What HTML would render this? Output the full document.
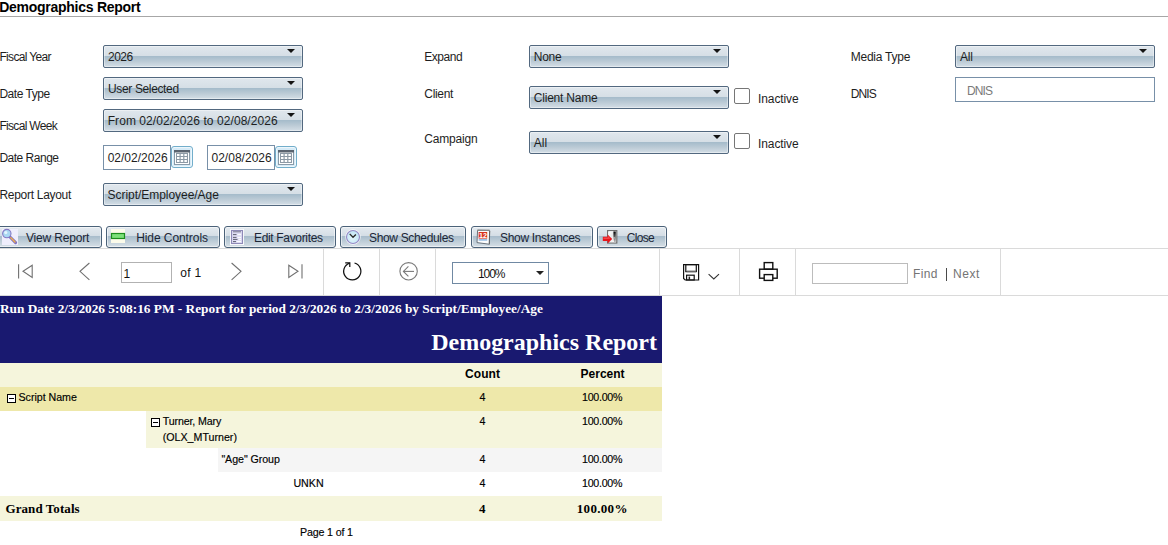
<!DOCTYPE html>
<html><head><meta charset="utf-8">
<style>
*{margin:0;padding:0;box-sizing:border-box}
html,body{width:1168px;height:545px;overflow:hidden;background:#fff}
body{position:relative;font-family:"Liberation Sans",sans-serif;color:#000}
.a{position:absolute}
.x{position:absolute;white-space:nowrap;line-height:20px}
.dd{position:absolute;width:200px;height:23px;border:1px solid #52687f;border-radius:2px;
 background:linear-gradient(#e0e7ed 0,#d6dfe6 9.5px,#a6bccb 10.5px,#bccbd6 15.5px,#d4dee6 21px);
 box-shadow:inset 0 0 0 1px rgba(255,255,255,.4)}
.dd i{position:absolute;right:7.5px;top:3px;width:0;height:0;border-left:4px solid transparent;border-right:4px solid transparent;border-top:4.5px solid #141414}
.tb{position:absolute;height:25px;border:1px solid #7890a8;background:#fff}
.cal{position:absolute;width:22px;height:22px;border:1px solid #72aecb;border-radius:3px;background:#d6ebf7;box-shadow:inset 0 0 0 1px #eef7fc}
.chk{position:absolute;width:16px;height:16px;border:1px solid #767676;border-radius:2px;background:#fff}
.btn{position:absolute;top:226px;height:22px;border:1px solid #4b6279;border-radius:3px;
 background:linear-gradient(#e4eaef 0,#d5dee6 8.5px,#a9bdcc 9.5px,#bdccd7 14px,#d6dfe6 20px);
 box-shadow:inset 0 0 0 1px rgba(255,255,255,.55)}
.sep{position:absolute;top:249px;width:1px;height:46px;background:#dadada}
.mi{position:absolute;width:9px;height:9px;border:1px solid #000;background:#fff}
.mi:after{content:"";position:absolute;left:1px;top:3px;width:5px;height:1px;background:#000}
svg{position:absolute;overflow:visible}
</style></head><body>

<div class="a" style="left:0;top:16px;width:1168px;height:1px;background:#a7a7a7"></div>

<div class="dd" style="left:103px;top:45px"><i></i></div>
<div class="dd" style="left:103px;top:77px"><i></i></div>
<div class="dd" style="left:103px;top:109px"><i></i></div>
<div class="tb" style="left:103px;top:145px;width:68px"></div>
<div class="cal" style="left:171px;top:146px"></div>
<div class="tb" style="left:207px;top:145px;width:68px"></div>
<div class="cal" style="left:275px;top:146px"></div>
<div class="dd" style="left:103px;top:183px"><i></i></div>

<div class="dd" style="left:529px;top:45px"><i></i></div>
<div class="dd" style="left:529px;top:86px"><i></i></div>
<div class="dd" style="left:529px;top:131px"><i></i></div>
<div class="chk" style="left:734px;top:88px"></div>
<div class="chk" style="left:734px;top:133px"></div>

<div class="dd" style="left:955px;top:45px"><i></i></div>
<div class="tb" style="left:955px;top:77px;width:200px"></div>

<!-- calendar icons -->
<svg style="left:171px;top:146px" width="22" height="22" viewBox="0 0 22 22">
 <rect x="3.5" y="4.5" width="15" height="14" fill="#fff" stroke="#8a9aa8" stroke-width="1"/>
 <rect x="3" y="4" width="16" height="2.5" fill="#5a6470"/>
 <rect x="5" y="7" width="12" height="10" fill="#8d9aa6"/>
 <g fill="#fff"><rect x="6" y="8" width="2.5" height="2"/><rect x="9.7" y="8" width="2.5" height="2"/><rect x="13.4" y="8" width="2.5" height="2"/>
 <rect x="6" y="11" width="2.5" height="2"/><rect x="9.7" y="11" width="2.5" height="2"/><rect x="13.4" y="11" width="2.5" height="2"/>
 <rect x="6" y="14" width="2.5" height="2"/><rect x="9.7" y="14" width="2.5" height="2"/><rect x="13.4" y="14" width="2.5" height="2"/></g>
</svg>
<svg style="left:275px;top:146px" width="22" height="22" viewBox="0 0 22 22">
 <rect x="3.5" y="4.5" width="15" height="14" fill="#fff" stroke="#8a9aa8" stroke-width="1"/>
 <rect x="3" y="4" width="16" height="2.5" fill="#5a6470"/>
 <rect x="5" y="7" width="12" height="10" fill="#8d9aa6"/>
 <g fill="#fff"><rect x="6" y="8" width="2.5" height="2"/><rect x="9.7" y="8" width="2.5" height="2"/><rect x="13.4" y="8" width="2.5" height="2"/>
 <rect x="6" y="11" width="2.5" height="2"/><rect x="9.7" y="11" width="2.5" height="2"/><rect x="13.4" y="11" width="2.5" height="2"/>
 <rect x="6" y="14" width="2.5" height="2"/><rect x="9.7" y="14" width="2.5" height="2"/><rect x="13.4" y="14" width="2.5" height="2"/></g>
</svg>

<!-- buttons -->
<div class="btn" style="left:-3px;width:105px"></div>
<div class="btn" style="left:106px;width:114px"></div>
<div class="btn" style="left:224px;width:112px"></div>
<div class="btn" style="left:340px;width:126px"></div>
<div class="btn" style="left:471px;width:122px"></div>
<div class="btn" style="left:597px;width:70px"></div>

<!-- button icons -->
<svg style="left:2px;top:229px" width="16" height="16" viewBox="0 0 16 16">
 <rect x="0" y="0" width="16" height="16" fill="#efeefc"/>
 <line x1="8" y1="8" x2="13.6" y2="13.6" stroke="#7d6fc0" stroke-width="3" stroke-linecap="round"/>
 <line x1="8.8" y1="8.8" x2="13" y2="13" stroke="#f2b04a" stroke-width="1.4" stroke-linecap="round"/>
 <circle cx="4.8" cy="4.6" r="4.2" fill="#a9d8f2" stroke="#8479c4" stroke-width="1.1"/>
 <circle cx="3.8" cy="3.6" r="1.6" fill="#e4f5fd"/>
</svg>
<svg style="left:111px;top:229px" width="14" height="14" viewBox="0 0 14 14">
 <rect x="0" y="0" width="14" height="14" fill="#fcfbea"/>
 <rect x="0.5" y="4.5" width="13" height="5" fill="#7ee07a" stroke="#1d8d1d" stroke-width="1.2"/>
</svg>
<svg style="left:230px;top:229px" width="14" height="16" viewBox="0 0 14 16">
 <rect x="0" y="0" width="14" height="16" fill="#fbfcfd"/>
 <rect x="1.5" y="1.5" width="11" height="13" fill="#dedcf3" stroke="#8f8ab8" stroke-width="1.1"/>
 <g stroke="#5e5e70" stroke-width="1"><line x1="3" y1="2.8" x2="11" y2="2.8" stroke="#77778a"/><line x1="3" y1="5.6" x2="6.5" y2="5.6"/><line x1="3" y1="8.4" x2="6.5" y2="8.4"/><line x1="3" y1="10.4" x2="7.5" y2="10.4"/><line x1="3" y1="12.6" x2="6" y2="12.6"/></g>
 <g stroke="#fff" stroke-width="1"><line x1="7.5" y1="5.6" x2="11" y2="5.6"/><line x1="7.5" y1="8.4" x2="11" y2="8.4"/><line x1="8.5" y1="10.4" x2="11" y2="10.4"/><line x1="7" y1="12.6" x2="11" y2="12.6"/></g>
</svg>
<svg style="left:345px;top:229px" width="16" height="16" viewBox="0 0 16 16">
 <defs><radialGradient id="cg" cx=".45" cy=".6" r=".6"><stop offset="0" stop-color="#e4f6fc"/><stop offset="1" stop-color="#bfe3f4"/></radialGradient></defs>
 <circle cx="8" cy="8" r="7.7" fill="#fff" opacity=".85"/>
 <circle cx="8" cy="8" r="6.5" fill="url(#cg)" stroke="#9489c6" stroke-width="1.1"/>
 <polyline points="4.7,4.9 8,8.3 10.9,5.5" fill="none" stroke="#262626" stroke-width="1.3"/>
</svg>
<svg style="left:476px;top:229px" width="15" height="16" viewBox="0 0 15 16">
 <path d="M1.6 1.2 L13.6 1.6 L13.2 15.2 L1 13.6 Z" fill="#fdfdfd" stroke="#6a737c" stroke-width="1"/>
 <path d="M13.6 1.6 L14.2 2 L13.8 15.4 L13.2 15.2 Z" fill="#555"/>
 <rect x="1.4" y="0.6" width="12.2" height="1.4" fill="#8a8a8a"/>
 <rect x="2.6" y="3" width="8.6" height="6.6" fill="#d9341e"/>
 <text x="6.9" y="8.9" font-family="Liberation Sans" font-weight="bold" font-size="7.2" fill="#fff" text-anchor="middle">12</text>
 <rect x="2.6" y="10.1" width="8.6" height="1.6" fill="#8db8e2"/>
</svg>
<svg style="left:602px;top:229px" width="16" height="16" viewBox="0 0 16 16">
 <defs><linearGradient id="dg" x1="0" y1="0" x2="1" y2="1"><stop offset="0" stop-color="#fff"/><stop offset=".45" stop-color="#e6e6e6"/><stop offset="1" stop-color="#fff"/></linearGradient>
 <linearGradient id="dk" x1="0" y1="0" x2="0" y2="1"><stop offset="0" stop-color="#000"/><stop offset="1" stop-color="#bbb"/></linearGradient></defs>
 <rect x="5.6" y="1.6" width="9.2" height="12.4" fill="#fff" stroke="#707070" stroke-width="1.2"/>
 <rect x="6.6" y="2.6" width="7.2" height="10.6" fill="url(#dg)"/>
 <path d="M11.4 2.6 L13.8 2.6 L13.8 13 L12 13 L11.4 9 Z" fill="url(#dk)"/>
 <rect x="11.6" y="8.4" width="1" height="1" fill="#fff"/>
 <path d="M0.8 7.8 L5.6 7.8 L5.6 5.4 L10.2 9.9 L5.6 14.4 L5.6 12 L0.8 12 Z" fill="#e8141a"/>
 <path d="M1.5 8.6 L6 8.6 L6 7 L8.5 9.5 L6 9.9 L1.5 9.9 Z" fill="#f66" opacity=".6"/>
</svg>

<!-- toolbar -->
<div class="a" style="left:0;top:248px;width:1168px;height:1px;background:#dadada"></div>
<div class="a" style="left:0;top:295px;width:1168px;height:1px;background:#dadada"></div>
<div class="sep" style="left:323px"></div>
<div class="sep" style="left:379px"></div>
<div class="sep" style="left:435px"></div>
<div class="sep" style="left:659px"></div>
<div class="sep" style="left:739px"></div>
<div class="sep" style="left:795px"></div>
<div class="sep" style="left:1000px"></div>

<svg style="left:0;top:249px" width="1168" height="46" viewBox="0 249 1168 46">
 <g fill="none" stroke="#707070" stroke-width="1.1">
  <line x1="18.6" y1="264.2" x2="18.6" y2="278.5"/>
  <path d="M32.2 265.2 L23 271.3 L32.2 277.5 Z"/>
  <polyline points="89.4,263 80,271.3 89.4,279.8"/>
  <polyline points="231.6,263 241,271.3 231.6,279.8"/>
  <path d="M288.8 265.2 L298 271.3 L288.8 277.5 Z"/>
  <line x1="302" y1="264.2" x2="302" y2="278.5"/>
 </g>
 <g fill="none" stroke="#111" stroke-width="1.25">
  <path d="M354.5 263 A8.6 8.6 0 1 1 349.7 263.1"/>
  <polyline points="345.2,262.8 349.8,262.8 349.8,267"/>
 </g>
 <g fill="none" stroke="#7a7a7a" stroke-width="1.1">
  <circle cx="408.6" cy="271.3" r="8.7"/>
  <polyline points="408.4,266.4 403.4,271.4 408.4,276.4"/>
  <line x1="403.4" y1="271.4" x2="414" y2="271.4"/>
 </g>
 <g fill="none" stroke="#111" stroke-width="1.2">
  <path d="M683.6 264.6 L698.6 264.6 L698.6 280 L685.2 280 L683.6 278.4 Z"/>
  <rect x="685.8" y="264.6" width="10.5" height="7" />
  <rect x="686.6" y="275.2" width="7.6" height="4.8"/>
 </g>
 <rect x="686.4" y="270.6" width="9.6" height="1.6" fill="#666"/>
 <rect x="688.6" y="276.6" width="1.5" height="3.4" fill="#222"/>
 <polyline points="708.6,274.2 713.8,279 719,274.2" fill="none" stroke="#333" stroke-width="1.1"/>
 <g fill="none" stroke="#111" stroke-width="1.4">
  <rect x="764.2" y="262.6" width="8.6" height="6.6"/>
  <rect x="759.6" y="269.2" width="17.6" height="9"/>
  <rect x="764.2" y="274.6" width="8.6" height="5.8" fill="#fff"/>
 </g>
</svg>

<div class="a" style="left:121px;top:262px;width:51px;height:21px;border:1px solid #b2b2b2"></div>
<div class="a" style="left:452px;top:262px;width:97px;height:22px;border:1px solid #7089a3"></div>
<div class="a" style="left:535.5px;top:271px;width:0;height:0;border-left:4px solid transparent;border-right:4px solid transparent;border-top:4.5px solid #222"></div>
<div class="a" style="left:812px;top:263px;width:96px;height:21px;border:1px solid #bcbcbc"></div>
<div class="a" style="left:946px;top:268px;width:1px;height:13px;background:#4a4a4a"></div>

<!-- report -->
<div class="a" style="left:0;top:296px;width:662px;height:67px;background:#191970"></div>
<div class="a" style="left:0;top:363px;width:662px;height:24px;background:#f5f5dc"></div>
<div class="a" style="left:0;top:387px;width:662px;height:24px;background:#eee8aa"></div>
<div class="mi" style="left:7px;top:394px"></div>
<div class="a" style="left:146px;top:411px;width:516px;height:37px;background:#f5f5dc"></div>
<div class="mi" style="left:151px;top:418px"></div>
<div class="a" style="left:218px;top:448px;width:444px;height:24px;background:#f5f5f5"></div>
<div class="a" style="left:0;top:496px;width:662px;height:25px;background:#f5f5dc"></div>

<div class="x" style="left:-0.80px;top:-3px;font-family:'Liberation Sans',sans-serif;font-weight:700;font-size:14px;letter-spacing:-0.266px;color:#000;">Demographics Report</div>
<div class="x" style="left:-0.60px;top:47px;font-family:'Liberation Sans',sans-serif;font-weight:400;font-size:12px;letter-spacing:-0.662px;color:#1e1e1e;">Fiscal Year</div>
<div class="x" style="left:-0.60px;top:84px;font-family:'Liberation Sans',sans-serif;font-weight:400;font-size:12px;letter-spacing:-0.453px;color:#1e1e1e;">Date Type</div>
<div class="x" style="left:-0.60px;top:116px;font-family:'Liberation Sans',sans-serif;font-weight:400;font-size:12px;letter-spacing:-0.683px;color:#1e1e1e;">Fiscal Week</div>
<div class="x" style="left:-0.60px;top:148px;font-family:'Liberation Sans',sans-serif;font-weight:400;font-size:12px;letter-spacing:-0.497px;color:#1e1e1e;">Date Range</div>
<div class="x" style="left:-0.60px;top:185px;font-family:'Liberation Sans',sans-serif;font-weight:400;font-size:12px;letter-spacing:-0.287px;color:#1e1e1e;">Report Layout</div>
<div class="x" style="left:108.00px;top:47px;font-family:'Liberation Sans',sans-serif;font-weight:400;font-size:12px;letter-spacing:-0.507px;color:#1e1e1e;">2026</div>
<div class="x" style="left:108.00px;top:79px;font-family:'Liberation Sans',sans-serif;font-weight:400;font-size:12px;letter-spacing:-0.358px;color:#1e1e1e;">User Selected</div>
<div class="x" style="left:107.70px;top:111px;font-family:'Liberation Sans',sans-serif;font-weight:400;font-size:12px;letter-spacing:0.066px;color:#1e1e1e;">From 02/02/2026 to 02/08/2026</div>
<div class="x" style="left:107.70px;top:148px;font-family:'Liberation Sans',sans-serif;font-weight:400;font-size:12px;letter-spacing:-0.009px;color:#1e1e1e;">02/02/2026</div>
<div class="x" style="left:211.50px;top:148px;font-family:'Liberation Sans',sans-serif;font-weight:400;font-size:12px;letter-spacing:0.013px;color:#1e1e1e;">02/08/2026</div>
<div class="x" style="left:107.50px;top:185px;font-family:'Liberation Sans',sans-serif;font-weight:400;font-size:12px;letter-spacing:-0.038px;color:#1e1e1e;">Script/Employee/Age</div>
<div class="x" style="left:424.30px;top:47px;font-family:'Liberation Sans',sans-serif;font-weight:400;font-size:12px;letter-spacing:-0.465px;color:#1e1e1e;">Expand</div>
<div class="x" style="left:424.30px;top:84px;font-family:'Liberation Sans',sans-serif;font-weight:400;font-size:12px;letter-spacing:-0.329px;color:#1e1e1e;">Client</div>
<div class="x" style="left:424.30px;top:129px;font-family:'Liberation Sans',sans-serif;font-weight:400;font-size:12px;letter-spacing:-0.189px;color:#1e1e1e;">Campaign</div>
<div class="x" style="left:533.80px;top:47px;font-family:'Liberation Sans',sans-serif;font-weight:400;font-size:12px;letter-spacing:-0.271px;color:#1e1e1e;">None</div>
<div class="x" style="left:533.80px;top:88px;font-family:'Liberation Sans',sans-serif;font-weight:400;font-size:12px;letter-spacing:-0.215px;color:#1e1e1e;">Client Name</div>
<div class="x" style="left:533.80px;top:133px;font-family:'Liberation Sans',sans-serif;font-weight:400;font-size:12px;letter-spacing:-0.035px;color:#1e1e1e;">All</div>
<div class="x" style="left:758.00px;top:89px;font-family:'Liberation Sans',sans-serif;font-weight:400;font-size:12px;letter-spacing:-0.097px;color:#1e1e1e;">Inactive</div>
<div class="x" style="left:758.00px;top:134px;font-family:'Liberation Sans',sans-serif;font-weight:400;font-size:12px;letter-spacing:-0.097px;color:#1e1e1e;">Inactive</div>
<div class="x" style="left:850.70px;top:47px;font-family:'Liberation Sans',sans-serif;font-weight:400;font-size:12px;letter-spacing:-0.229px;color:#1e1e1e;">Media Type</div>
<div class="x" style="left:850.70px;top:84px;font-family:'Liberation Sans',sans-serif;font-weight:400;font-size:12px;letter-spacing:-0.889px;color:#1e1e1e;">DNIS</div>
<div class="x" style="left:959.90px;top:47px;font-family:'Liberation Sans',sans-serif;font-weight:400;font-size:12px;letter-spacing:-0.185px;color:#1e1e1e;">All</div>
<div class="x" style="left:967.00px;top:81px;font-family:'Liberation Sans',sans-serif;font-weight:400;font-size:12px;letter-spacing:-0.889px;color:#7a7a7a;">DNIS</div>
<div class="x" style="left:26.00px;top:228px;font-family:'Liberation Sans',sans-serif;font-weight:400;font-size:12px;letter-spacing:-0.181px;color:#1c2636;">View Report</div>
<div class="x" style="left:136.20px;top:228px;font-family:'Liberation Sans',sans-serif;font-weight:400;font-size:12px;letter-spacing:-0.075px;color:#1c2636;">Hide Controls</div>
<div class="x" style="left:254.00px;top:228px;font-family:'Liberation Sans',sans-serif;font-weight:400;font-size:12px;letter-spacing:-0.335px;color:#1c2636;">Edit Favorites</div>
<div class="x" style="left:369.00px;top:228px;font-family:'Liberation Sans',sans-serif;font-weight:400;font-size:12px;letter-spacing:-0.338px;color:#1c2636;">Show Schedules</div>
<div class="x" style="left:500.00px;top:228px;font-family:'Liberation Sans',sans-serif;font-weight:400;font-size:12px;letter-spacing:-0.324px;color:#1c2636;">Show Instances</div>
<div class="x" style="left:626.70px;top:228px;font-family:'Liberation Sans',sans-serif;font-weight:400;font-size:12px;letter-spacing:-0.676px;color:#1c2636;">Close</div>
<div class="x" style="left:123.50px;top:264px;font-family:'Liberation Sans',sans-serif;font-weight:400;font-size:12px;letter-spacing:0.000px;color:#111;">1</div>
<div class="x" style="left:180.30px;top:263px;font-family:'Liberation Sans',sans-serif;font-weight:400;font-size:12px;letter-spacing:0.286px;color:#111;">of 1</div>
<div class="x" style="left:478.00px;top:264px;font-family:'Liberation Sans',sans-serif;font-weight:400;font-size:12px;letter-spacing:-1.074px;color:#111;">100%</div>
<div class="x" style="left:913.00px;top:264px;font-family:'Liberation Sans',sans-serif;font-weight:400;font-size:12px;letter-spacing:0.343px;color:#747474;">Find</div>
<div class="x" style="left:953.00px;top:264px;font-family:'Liberation Sans',sans-serif;font-weight:400;font-size:12px;letter-spacing:0.553px;color:#747474;">Next</div>
<div class="x" style="left:0.00px;top:299px;font-family:'Liberation Serif',serif;font-weight:700;font-size:13.33px;letter-spacing:-0.008px;color:#fff;">Run Date 2/3/2026 5:08:16 PM - Report for period 2/3/2026 to 2/3/2026 by Script/Employee/Age</div>
<div class="x" style="left:431.20px;top:332px;font-family:'Liberation Serif',serif;font-weight:700;font-size:24px;letter-spacing:-0.009px;color:#fff;">Demographics Report</div>
<div class="x" style="left:465.00px;top:364px;font-family:'Liberation Sans',sans-serif;font-weight:700;font-size:12px;letter-spacing:0.086px;color:#000;">Count</div>
<div class="x" style="left:580.60px;top:364px;font-family:'Liberation Sans',sans-serif;font-weight:700;font-size:12px;letter-spacing:-0.021px;color:#000;">Percent</div>
<div class="x" style="left:18.50px;top:387px;font-family:'Liberation Sans',sans-serif;font-weight:400;font-size:10.67px;letter-spacing:-0.030px;color:#000;-webkit-text-stroke:0.15px #000">Script Name</div>
<div class="x" style="left:479.50px;top:387px;font-family:'Liberation Sans',sans-serif;font-weight:400;font-size:10.67px;letter-spacing:0.000px;color:#000;-webkit-text-stroke:0.15px #000">4</div>
<div class="x" style="left:582.00px;top:387px;font-family:'Liberation Sans',sans-serif;font-weight:400;font-size:10.67px;letter-spacing:-0.266px;color:#000;-webkit-text-stroke:0.15px #000">100.00%</div>
<div class="x" style="left:162.70px;top:411px;font-family:'Liberation Sans',sans-serif;font-weight:400;font-size:10.67px;letter-spacing:-0.125px;color:#000;-webkit-text-stroke:0.15px #000">Turner, Mary</div>
<div class="x" style="left:162.70px;top:427px;font-family:'Liberation Sans',sans-serif;font-weight:400;font-size:10.67px;letter-spacing:0.003px;color:#000;-webkit-text-stroke:0.15px #000">(OLX_MTurner)</div>
<div class="x" style="left:479.50px;top:411px;font-family:'Liberation Sans',sans-serif;font-weight:400;font-size:10.67px;letter-spacing:0.000px;color:#000;-webkit-text-stroke:0.15px #000">4</div>
<div class="x" style="left:582.00px;top:411px;font-family:'Liberation Sans',sans-serif;font-weight:400;font-size:10.67px;letter-spacing:-0.266px;color:#000;-webkit-text-stroke:0.15px #000">100.00%</div>
<div class="x" style="left:221.40px;top:449px;font-family:'Liberation Sans',sans-serif;font-weight:400;font-size:10.67px;letter-spacing:-0.058px;color:#000;-webkit-text-stroke:0.15px #000">"Age" Group</div>
<div class="x" style="left:479.50px;top:449px;font-family:'Liberation Sans',sans-serif;font-weight:400;font-size:10.67px;letter-spacing:0.000px;color:#000;-webkit-text-stroke:0.15px #000">4</div>
<div class="x" style="left:582.00px;top:449px;font-family:'Liberation Sans',sans-serif;font-weight:400;font-size:10.67px;letter-spacing:-0.266px;color:#000;-webkit-text-stroke:0.15px #000">100.00%</div>
<div class="x" style="left:293.40px;top:473px;font-family:'Liberation Sans',sans-serif;font-weight:400;font-size:10.67px;letter-spacing:0.034px;color:#000;-webkit-text-stroke:0.15px #000">UNKN</div>
<div class="x" style="left:479.50px;top:473px;font-family:'Liberation Sans',sans-serif;font-weight:400;font-size:10.67px;letter-spacing:0.000px;color:#000;-webkit-text-stroke:0.15px #000">4</div>
<div class="x" style="left:582.00px;top:473px;font-family:'Liberation Sans',sans-serif;font-weight:400;font-size:10.67px;letter-spacing:-0.266px;color:#000;-webkit-text-stroke:0.15px #000">100.00%</div>
<div class="x" style="left:5.50px;top:499px;font-family:'Liberation Serif',serif;font-weight:700;font-size:13px;letter-spacing:0.072px;color:#000;">Grand Totals</div>
<div class="x" style="left:479.00px;top:499px;font-family:'Liberation Serif',serif;font-weight:700;font-size:13px;letter-spacing:0.000px;color:#000;">4</div>
<div class="x" style="left:576.80px;top:499px;font-family:'Liberation Serif',serif;font-weight:700;font-size:13px;letter-spacing:0.308px;color:#000;">100.00%</div>
<div class="x" style="left:300.00px;top:522px;font-family:'Liberation Sans',sans-serif;font-weight:400;font-size:10.67px;letter-spacing:-0.158px;color:#000;-webkit-text-stroke:0.15px #000">Page 1 of 1</div>
</body></html>
